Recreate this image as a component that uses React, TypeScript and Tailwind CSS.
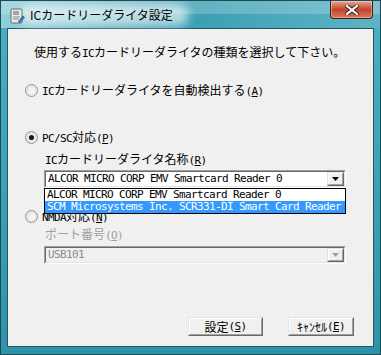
import React from "react";

const JP = "font-['Noto_Sans_CJK_JP',sans-serif]";
const MONO = "font-['DejaVu_Sans_Mono',monospace] text-[11px] tracking-[-0.62px]";

function M({ children }: { children: React.ReactNode }) {
  return <span className={MONO}>{children}</span>;
}

function Acc({ k }: { k: string }) {
  return (
    <M>
      (<span className="underline underline-offset-[1px]">{k}</span>)
    </M>
  );
}

function Radio({ checked }: { checked?: boolean }) {
  return (
    <svg width="13" height="13" viewBox="0 0 13 13" className="shrink-0">
      <defs>
        <linearGradient id={checked ? "rg1" : "rg0"} x1="0" y1="0" x2="1" y2="1">
          <stop offset="0" stopColor="#e6e6e6" />
          <stop offset="1" stopColor="#ffffff" />
        </linearGradient>
      </defs>
      <circle cx="6.5" cy="6.5" r="6" fill="#f4f4f4" stroke="#8e8f8f" strokeWidth="1" />
      <circle cx="6.5" cy="6.5" r="4.5" fill={`url(#${checked ? "rg1" : "rg0"})`} stroke="#d0d0d0" strokeWidth="0.8" />
      {checked && <circle cx="6.5" cy="6.5" r="2.6" fill="#1c1c1c" />}
    </svg>
  );
}

function Sunken({ children, className }: { children: React.ReactNode; className?: string }) {
  return (
    <div className={`border border-t-[#a0a0a0] border-l-[#a0a0a0] border-b-white border-r-white ${className ?? ""}`}>
      <div className="h-full border border-t-[#696969] border-l-[#696969] border-b-[#e3e3e3] border-r-[#e3e3e3]">
        {children}
      </div>
    </div>
  );
}

function ArrowBtn({ disabled }: { disabled?: boolean }) {
  return (
    <div className="w-[17px] h-full bg-[#f0f0f0] border border-t-[#e3e3e3] border-l-[#e3e3e3] border-b-[#696969] border-r-[#696969]">
      <div className="h-full border border-t-white border-l-white border-b-[#a0a0a0] border-r-[#a0a0a0] flex items-center justify-center">
        <svg width="7" height="4" viewBox="0 0 7 4">
          <polygon points="0,0 7,0 3.5,4" fill={disabled ? "#a0a0a0" : "#000"} />
        </svg>
      </div>
    </div>
  );
}

function Button({ children, w }: { children: React.ReactNode; w: string }) {
  return (
    <div className={`${w} h-[19px] bg-[#f0f0f0] border border-t-[#e3e3e3] border-l-[#e3e3e3] border-b-[#696969] border-r-[#696969]`}>
      <div className="h-full border border-t-white border-l-white border-b-[#a0a0a0] border-r-[#a0a0a0] flex items-center justify-center text-[12px] leading-[12px] text-black">
        {children}
      </div>
    </div>
  );
}

export default function App() {
  return (
    <div className={`${JP} w-[381px] h-[355px] flex flex-col bg-gradient-to-b from-[#4cb0c4] to-[#2f93a8] border border-[#1d4a55] overflow-hidden relative`}>
      {/* title bar */}
      <div className="h-[27px] shrink-0 relative flex items-center bg-gradient-to-r from-[#8fcfdb] via-[#3a9fb4] to-[#5db4c4]">
        <div className="absolute inset-x-0 top-0 h-[13px] bg-white/20" />
        <div className="absolute left-[18px] top-[3px] w-[170px] h-[22px] rounded-full bg-white/60 blur-[5px]" />
        <svg width="16" height="16" viewBox="0 0 16 16" className="relative ml-[8px] mt-[2px]">
          <rect x="2" y="1" width="11" height="14" rx="1" fill="#e9e9e9" stroke="#6a6a6a" />
          <rect x="4" y="3" width="6" height="4" fill="#9aa6b0" />
          <line x1="4" y1="9" x2="11" y2="9" stroke="#888" />
          <line x1="4" y1="11" x2="10" y2="11" stroke="#888" />
          <path d="M9 14 L14 8 L15.5 9.5 L10.5 15 Z" fill="#3d6fd1" stroke="#263f7a" strokeWidth="0.6" />
          <path d="M9 14 L10.5 15 L8.5 15.5 Z" fill="#f0c040" />
        </svg>
        <span className="relative ml-[5px] mt-[1px] text-[12px] leading-[12px] text-black">ICカードリーダライタ設定</span>
        <div className="absolute top-0 right-[7px] w-[43px] h-[18px] rounded-b-[4px] border border-t-0 border-[#4a1a10] bg-gradient-to-b from-[#e8a794] via-[#c2432a] to-[#d9785a] flex items-center justify-center shadow-[inset_0_0_0_1px_rgba(255,255,255,0.35)]">
          <svg width="14" height="10" viewBox="0 0 14 10">
            <path d="M2 1 L12 9 M12 1 L2 9" stroke="#3a1a14" strokeWidth="4" strokeLinecap="square" />
            <path d="M2 1 L12 9 M12 1 L2 9" stroke="#ffffff" strokeWidth="2.2" strokeLinecap="square" />
          </svg>
        </div>
      </div>

      {/* body with frames */}
      <div className="flex-1 flex px-[6px] pb-[7px]">
        <div className="flex-1 border border-[#1f5866] bg-[#f0f0f0]">
          <div className="h-full relative flex flex-col text-black text-[12px] leading-[12px]">
            <div className="mt-[17px] ml-[26px] h-[12px] whitespace-nowrap">
              使用する<M>IC</M>カードリーダライタの種類を選択して下さい。
            </div>

            <div className="mt-[26px] ml-[17px] h-[13px] flex items-center gap-[4px] whitespace-nowrap">
              <Radio />
              <span>
                <M>IC</M>カードリーダライタを自動検出する<Acc k="A" />
              </span>
            </div>

            <div className="mt-[34px] ml-[17px] h-[13px] flex items-center gap-[4px] whitespace-nowrap">
              <Radio checked />
              <span>
                <M>PC/SC</M>対応<Acc k="P" />
              </span>
            </div>

            <div className="mt-[9px] ml-[37px] h-[12px] whitespace-nowrap">
              <M>IC</M>カードリーダライタ名称<Acc k="R" />
            </div>

            <Sunken className="mt-[5px] ml-[36px] w-[302px] h-[18px] shrink-0">
              <div className="h-full bg-white flex">
                <div className={`flex-1 pl-[2px] flex items-center ${MONO} leading-[12px] whitespace-nowrap`}>
                  ALCOR MICRO CORP EMV Smartcard Reader 0
                </div>
                <ArrowBtn />
              </div>
            </Sunken>

            <div className="mt-[22px] ml-[17px] h-[13px] flex items-center gap-[4px] whitespace-nowrap">
              <Radio />
              <span>
                <M>NMDA</M>対応<Acc k="N" />
              </span>
            </div>

            <div className="mt-[5px] ml-[37px] h-[12px] whitespace-nowrap text-[#a0a0a0]">
              ポート番号<Acc k="O" />
            </div>

            <Sunken className="mt-[6px] ml-[36px] w-[302px] h-[18px] shrink-0">
              <div className="h-full bg-[#f0f0f0] flex">
                <div className={`flex-1 pl-[2px] flex items-center ${MONO} leading-[12px] text-[#8c8c8c] whitespace-nowrap`}>
                  USB101
                </div>
                <ArrowBtn disabled />
              </div>
            </Sunken>

            <div className="mt-[53px] flex justify-end gap-[25px] pr-[19px]">
              <Button w="w-[75px]">
                設定<Acc k="S" />
              </Button>
              <Button w="w-[66px]">
                ｷｬﾝｾﾙ<Acc k="E" />
              </Button>
            </div>

            {/* open dropdown list */}
            <div className={`absolute left-[36px] top-[159px] w-[302px] h-[26px] bg-white border border-black flex flex-col ${MONO} leading-[12px] whitespace-nowrap`}>
              <div className="h-[12px] pl-[2px] flex items-center">ALCOR MICRO CORP EMV Smartcard Reader 0</div>
              <div className="h-[12px] pl-[2px] flex items-center bg-[#3399ff] text-white">
                SCM Microsystems Inc. SCR331-DI Smart Card Reader
              </div>
            </div>
          </div>
        </div>
      </div>
    </div>
  );
}
